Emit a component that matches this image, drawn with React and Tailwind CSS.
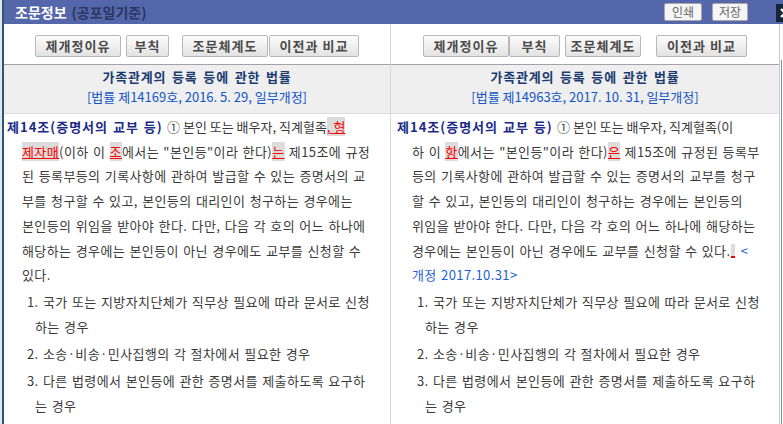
import React from 'react'

const FONT = "font-['Noto_Sans_CJK_KR','Noto_Sans',sans-serif]"

function Hl({ children }) {
  return <span className="bg-[#dcdcdc] text-[#ff0000] underline decoration-[#ff0000]">{children}</span>
}

function Head({ children }) {
  return <span className="font-bold tracking-[1px] text-[#1b2a86]">{children}</span>
}

// 첫 줄 나머지는 조금 좁게
function Rest({ children }) {
  return <span className="tracking-normal [word-spacing:0px]">{children}</span>
}

const leftButtons = [
  { label: '제개정이유', w: 'w-[86px]', ml: 'ml-0' },
  { label: '부칙', w: 'w-[43px]', ml: 'ml-[5px]' },
  { label: '조문체계도', w: 'w-[86px]', ml: 'ml-[13px]' },
  { label: '이전과 비교', w: 'w-[90px]', ml: 'ml-px' },
]

const rightButtons = [
  { label: '제개정이유', w: 'w-[86px]', ml: 'ml-0' },
  { label: '부칙', w: 'w-[51px]', ml: 'ml-0' },
  { label: '조문체계도', w: 'w-[76px]', ml: 'ml-[5px]' },
  { label: '이전과 비교', w: 'w-[91px]', ml: 'ml-[15px]' },
]

const items = [
  ['1. 국가 또는 지방자치단체가 직무상 필요에 따라 문서로 신청', '하는 경우'],
  ['2. 소송·비송·민사집행의 각 절차에서 필요한 경우'],
  ['3. 다른 법령에서 본인등에 관한 증명서를 제출하도록 요구하', '는 경우'],
  ['4. 그 밖에 대법원규칙으로 정하는 정당한 이해관계가 있는 사람이', '신청하는 경우'],
]

function Panel({ buttons, law, lines, shift }) {
  return (
    <div className="flex h-full min-w-0 flex-1 flex-col">
      {/* 버튼 */}
      <div className="flex justify-center border-b border-[#a3a3a3] pt-[11px] pb-[7px]">
        {buttons.map(b => (
          <button
            key={b.label}
            className={`${b.w} ${b.ml} h-[22px] rounded-[2px] border border-[#b8b8b8] bg-gradient-to-b from-[#fdfdfd] to-[#e2e2e2] text-[13px] font-bold leading-[20px] tracking-[1px] text-[#4a4a4a]`}
          >
            {b.label}
          </button>
        ))}
      </div>

      {/* 법률명 */}
      <div className="border-b border-[#dddddd] bg-[#efefef] pt-[2px] pb-[6px] text-center text-[13px] leading-[20px]">
        <div className="font-bold tracking-[0.8px] text-[#1b3b6f] [word-spacing:2px]">가족관계의 등록 등에 관한 법률</div>
        <div className="text-[#1254c8]">{law}</div>
      </div>

      {/* 본문 */}
      <div className="min-h-0 flex-1 overflow-hidden pt-px text-[13px] tracking-[0.4px] text-[#3a3a3a] [word-spacing:1px]">
        <p className={`${shift ? 'pl-[21px]' : 'pl-[18px]'} -indent-[15px] leading-[24.7px] whitespace-nowrap`}>
          {lines.map((l, i) => (
            <React.Fragment key={i}>
              {l}
              {i < lines.length - 1 && <br />}
            </React.Fragment>
          ))}
        </p>
        <div className="mt-px space-y-[2px]">
          {items.map((it, i) => (
            <p key={i} className={`${shift ? 'pl-[34px]' : 'pl-[31px]'} -indent-[8px] leading-[25px] whitespace-nowrap`}>
              {it[0]}
              {it[1] && <br />}
              {it[1]}
            </p>
          ))}
        </div>
      </div>
    </div>
  )
}

const leftLines = [
  <><Head>제14조(증명서의 교부 등)</Head> <Rest>① 본인 또는 배우자, 직계혈족<Hl>, 형</Hl></Rest></>,
  <><Hl>제자매</Hl>(이하 이 <Hl>조</Hl>에서는 "본인등"이라 한다)<Hl>는</Hl> 제15조에 규정</>,
  <>된 등록부등의 기록사항에 관하여 발급할 수 있는 증명서의 교</>,
  <>부를 청구할 수 있고, 본인등의 대리인이 청구하는 경우에는</>,
  <>본인등의 위임을 받아야 한다. 다만, 다음 각 호의 어느 하나에</>,
  <>해당하는 경우에는 본인등이 아닌 경우에도 교부를 신청할 수</>,
  <>있다.</>,
]

const rightLines = [
  <><Head>제14조(증명서의 교부 등)</Head> <Rest>① 본인 또는 배우자, 직계혈족(이</Rest></>,
  <>하 이 <Hl>항</Hl>에서는 "본인등"이라 한다)<Hl>은</Hl> 제15조에 규정된 등록부</>,
  <>등의 기록사항에 관하여 발급할 수 있는 증명서의 교부를 청구</>,
  <>할 수 있고, 본인등의 대리인이 청구하는 경우에는 본인등의</>,
  <>위임을 받아야 한다. 다만, 다음 각 호의 어느 하나에 해당하는</>,
  <>
    경우에는 본인등이 아닌 경우에도 교부를 신청할 수 있다.
    <span className="mx-[1px] inline-block h-[14px] w-[4px] border-b-2 border-[#ff0000] bg-[#dcdcdc] align-[-2px]" />
    {' '}<span className="text-[#1b5fd6]">&lt;</span>
  </>,
  <span className="text-[#1b5fd6]">개정 2017.10.31&gt;</span>,
]

export default function App() {
  return (
    <div className={`flex h-[424px] w-[783px] overflow-hidden bg-white ${FONT}`}>
      <div className="w-[2px] bg-[#e3e6ea]" />
      <div className="w-[2px] bg-[#2d5675]" />

      <div className="flex min-w-0 flex-1 flex-col">
        {/* 타이틀 */}
        <div className="flex h-[24px] items-center bg-[#5567ab] pl-[11px]">
          <span className="text-[14px] font-bold text-white">조문정보</span>
          <span className="ml-[5px] text-[14px] font-bold text-[#2a3560]">(공포일기준)</span>
          <div className="ml-auto flex gap-[10px]">
            <button className="h-[18px] w-[38px] rounded-[2px] border border-[#a9a9a9] bg-[#f5f5f5] text-[12px] leading-[16px] text-[#666666]">인쇄</button>
            <button className="h-[18px] w-[36px] rounded-[2px] border border-[#a9a9a9] bg-[#f5f5f5] text-[12px] leading-[16px] text-[#666666]">저장</button>
          </div>
          <div className="ml-[28px] w-[7px] self-start overflow-hidden pt-[4px]">
            <div className="flex h-[18px] w-[18px] items-center justify-center bg-[#15263a]">
              <svg width="10" height="10" viewBox="0 0 10 10">
                <path d="M1 1 L9 9 M9 1 L1 9" stroke="white" strokeWidth="2.2" />
              </svg>
            </div>
          </div>
        </div>

        <div className="flex min-h-0 flex-1">
          <div className="flex w-[386px]">
            <Panel buttons={leftButtons} law="[법률 제14169호, 2016. 5. 29, 일부개정]" lines={leftLines} />
          </div>
          <div className="w-px bg-[#d6d6d6]" />
          <Panel buttons={rightButtons} law="[법률 제14963호, 2017. 10. 31, 일부개정]" lines={rightLines} shift />
          <div className="w-px bg-[#cccccc]" />
          <div className="flex w-[3px] pt-[36px]">
            <div className="ml-px w-px bg-[#6f8fb8]" />
          </div>
        </div>
      </div>
    </div>
  )
}
